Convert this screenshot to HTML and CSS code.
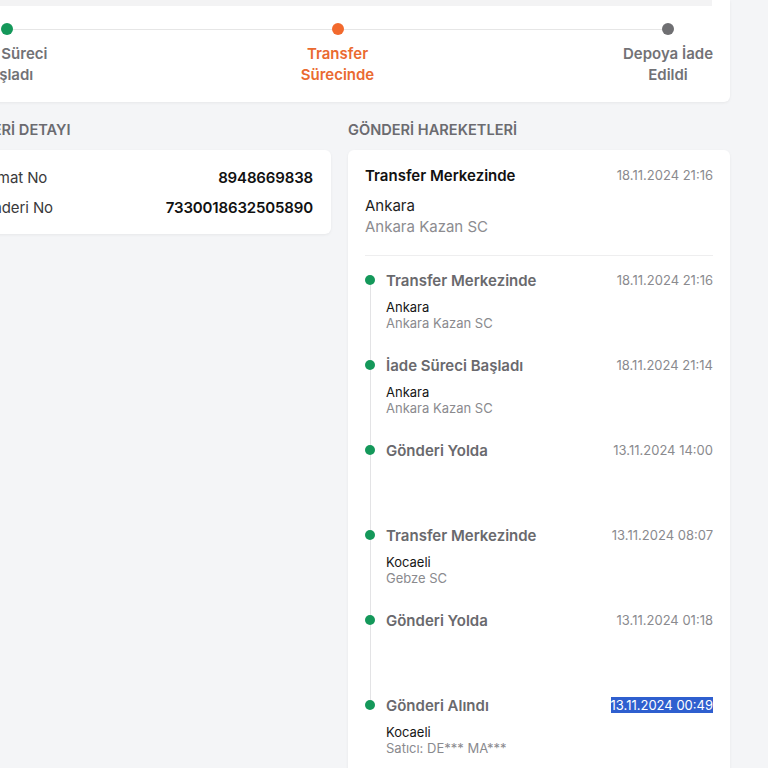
FILE: index.html
```html
<!DOCTYPE html>
<html lang="tr">
<head>
<meta charset="utf-8">
<title>Gönderi Takip</title>
<link rel="stylesheet" href="styles.css">
</head>
<body>
<div class="page">
  <section class="card status-card">
    <div class="status-band"></div>
    <div class="stepper">
      <div class="step done">
        <span class="step-dot"></span>
        <span class="step-label">İade Süreci<br>Başladı</span>
      </div>
      <div class="step active">
        <span class="step-dot"></span>
        <span class="step-label">Transfer<br>Sürecinde</span>
      </div>
      <div class="step pending">
        <span class="step-dot"></span>
        <span class="step-label">Depoya İade<br>Edildi</span>
      </div>
    </div>
  </section>

  <div class="columns">
    <div class="col">
      <h2 class="section-title">GÖNDERİ DETAYI</h2>
      <div class="card detail-card">
        <div class="detail-row"><span class="detail-key">Talimat No</span><span class="detail-val">8948669838</span></div>
        <div class="detail-row"><span class="detail-key">Gönderi No</span><span class="detail-val">7330018632505890</span></div>
      </div>
    </div>
    <div class="col">
      <h2 class="section-title">GÖNDERİ HAREKETLERİ</h2>
      <div class="card moves-card">
        <div class="current">
          <div class="current-head"><span class="current-title">Transfer Merkezinde</span><span class="date">18.11.2024 21:16</span></div>
          <div class="current-city">Ankara</div>
          <div class="current-branch">Ankara Kazan SC</div>
        </div>
        <ul class="timeline">
          <li class="tl-item">
            <div class="tl-rail"><span class="tl-dot"></span><span class="tl-line"></span></div>
            <div class="tl-body">
              <div class="tl-head"><span class="tl-title">Transfer Merkezinde</span><span class="date">18.11.2024 21:16</span></div>
              <div class="tl-city">Ankara</div>
              <div class="tl-branch">Ankara Kazan SC</div>
            </div>
          </li>
          <li class="tl-item">
            <div class="tl-rail"><span class="tl-dot"></span><span class="tl-line"></span></div>
            <div class="tl-body">
              <div class="tl-head"><span class="tl-title">İade Süreci Başladı</span><span class="date">18.11.2024 21:14</span></div>
              <div class="tl-city">Ankara</div>
              <div class="tl-branch">Ankara Kazan SC</div>
            </div>
          </li>
          <li class="tl-item">
            <div class="tl-rail"><span class="tl-dot"></span><span class="tl-line"></span></div>
            <div class="tl-body">
              <div class="tl-head"><span class="tl-title">Gönderi Yolda</span><span class="date">13.11.2024 14:00</span></div>
            </div>
          </li>
          <li class="tl-item">
            <div class="tl-rail"><span class="tl-dot"></span><span class="tl-line"></span></div>
            <div class="tl-body">
              <div class="tl-head"><span class="tl-title">Transfer Merkezinde</span><span class="date">13.11.2024 08:07</span></div>
              <div class="tl-city">Kocaeli</div>
              <div class="tl-branch">Gebze SC</div>
            </div>
          </li>
          <li class="tl-item">
            <div class="tl-rail"><span class="tl-dot"></span><span class="tl-line"></span></div>
            <div class="tl-body">
              <div class="tl-head"><span class="tl-title">Gönderi Yolda</span><span class="date">13.11.2024 01:18</span></div>
            </div>
          </li>
          <li class="tl-item last">
            <div class="tl-rail"><span class="tl-dot"></span></div>
            <div class="tl-body">
              <div class="tl-head"><span class="tl-title">Gönderi Alındı</span><span class="date selected">13.11.2024 00:49</span></div>
              <div class="tl-city">Kocaeli</div>
              <div class="tl-branch">Satıcı: DE*** MA***</div>
            </div>
          </li>
        </ul>
      </div>
    </div>
  </div>
</div>
</body>
</html>
```

FILE: styles.css
```css
* { box-sizing: border-box; }
html, body { margin: 0; padding: 0; }
body {
  background: #f4f5f7;
  font-family: Inter, "Noto Sans", "Liberation Sans", sans-serif;
  color: #1a1a1a;
  overflow: hidden;
  height: 768px;
}
.page {
  width: 781px;
  margin-left: -51px;
}
.card {
  background: #fff;
  border-radius: 6px;
  box-shadow: 0 1px 3px rgba(0, 0, 0, 0.06);
}
.status-card {
  padding: 0 18px 17px 0;
  border-radius: 0 0 6px 6px;
}
.status-band {
  height: 6px;
  background: #f3f3f4;
}
.stepper {
  position: relative;
  display: flex;
  justify-content: space-between;
  padding: 17px 0 0 14px;
}
.stepper::before {
  content: "";
  position: absolute;
  top: 23px;
  left: 58px;
  right: 44px;
  border-top: 1px solid #e6e6e6;
}
.step {
  width: 88px;
  display: flex;
  flex-direction: column;
  align-items: center;
  position: relative;
}
.step-dot {
  width: 12px;
  height: 12px;
  border-radius: 50%;
  background: #6f6f72;
}
.step-label {
  margin-top: 8px;
  white-space: nowrap;
  text-align: center;
  font-size: 15px;
  line-height: 21px;
  font-weight: 600;
  color: #727276;
}
.step.done .step-dot { background: #14985a; }
.step.active .step-dot { background: #f2692d; }
.step.active .step-label { color: #ea6a30; }

.columns {
  display: grid;
  grid-template-columns: 382px 382px;
  column-gap: 17px;
  margin-top: 18px;
}
.section-title {
  margin: 0 0 10px;
  font-size: 14.6px;
  line-height: 20px;
  font-weight: 600;
  color: #6b6b70;
}
.detail-card {
  padding: 12px 18px 12px 24px;
}
.detail-row {
  display: flex;
  justify-content: space-between;
  align-items: center;
  height: 30px;
  font-size: 15px;
}
.detail-key { color: #3a3a3c; letter-spacing: -0.1px; }
.detail-val { font-weight: 600; color: #111; letter-spacing: -0.15px; }

.moves-card {
  padding: 15px 17px 0 17px;
  min-height: 640px;
}
.current {
  padding-bottom: 18px;
  border-bottom: 1px solid #eeeeef;
}
.current-head, .tl-head {
  display: flex;
  justify-content: space-between;
  align-items: center;
  height: 20px;
}
.current-title {
  font-size: 15px;
  font-weight: 600;
  color: #111;
}
.date {
  font-size: 13px;
  color: #8a8a8e;
}
.date.selected {
  background: #2f5fcf;
  color: #fff;
}
.current-city {
  margin-top: 11px;
  font-size: 15px;
  line-height: 20px;
  color: #1e1e1e;
}
.current-branch {
  margin-top: 1px;
  font-size: 15px;
  line-height: 20px;
  color: #8c8c90;
}
.timeline {
  list-style: none;
  margin: 0;
  padding: 14px 0 0;
}
.tl-item {
  display: grid;
  grid-template-columns: 10px 1fr;
  column-gap: 11px;
  min-height: 85px;
}
.tl-rail {
  display: flex;
  flex-direction: column;
  align-items: center;
}
.tl-dot {
  width: 10px;
  height: 10px;
  border-radius: 50%;
  background: #14985a;
  margin-top: 5px;
  flex: none;
}
.tl-line {
  flex: 1;
  width: 1px;
  background: #e3e3e5;
  margin-bottom: -5px;
}
.tl-title {
  font-size: 15px;
  font-weight: 600;
  color: #69696d;
}
.tl-city {
  margin-top: 9px;
  font-size: 13px;
  line-height: 16px;
  color: #151515;
}
.tl-branch {
  font-size: 13px;
  line-height: 16px;
  color: #8a8a8e;
}
```
